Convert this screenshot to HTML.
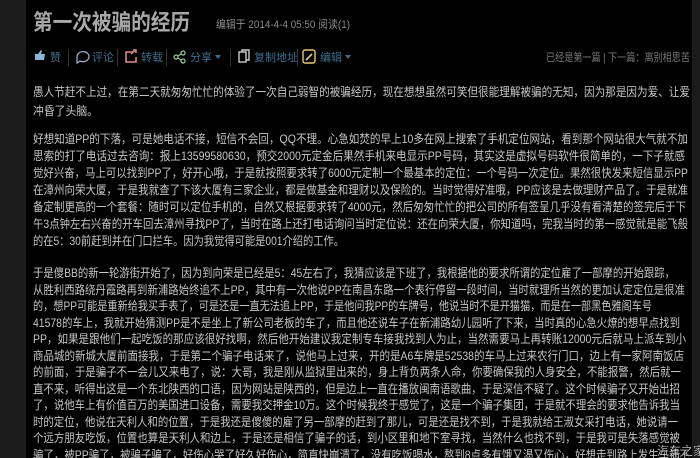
<!DOCTYPE html>
<html><head><meta charset="utf-8"><style>
html,body{margin:0;padding:0;width:700px;height:458px;overflow:hidden;background:#1b1b1b;}
.main{position:absolute;left:26px;top:0;width:666px;height:458px;background:#000;}
svg{position:absolute;left:0;top:0;}
text{font-family:"Liberation Sans","Noto Sans CJK SC","WenQuanYi Zen Hei",sans-serif;}
</style></head><body>
<div class="main"></div>
<svg width="700" height="458" viewBox="0 0 700 458">
<text x="33" y="30" font-size="22" font-weight="bold" fill="#a8a8a8" textLength="157" lengthAdjust="spacingAndGlyphs">第一次被骗的经历</text>
<text x="216" y="28" font-size="11" fill="#8a8a8a" textLength="134" lengthAdjust="spacingAndGlyphs">编辑于  2014-4-4 05:50  阅读(1)</text>
<!-- toolbar -->
<g fill="#3f6f8f" font-size="11">
<rect x="35" y="54" width="3" height="6" fill="#8ab4d8"/><path d="M38 54 L41 50 L42 51 L41 54 L45 54 L44 60 L38 60Z" fill="#8ab4d8"/>
<text x="50" y="61">赞</text>
<rect x="68" y="49" width="1" height="17" fill="#333"/>
<path d="M77 57 a6 5 0 1 1 3 4 l-3 2z" fill="none" stroke="#9ab" stroke-width="1.3"/>
<text x="92" y="61">评论</text>
<rect x="117" y="49" width="1" height="17" fill="#333"/>
<path d="M133 52 h-7 v10 h10 v-5" fill="none" stroke="#e08888" stroke-width="1.6"/><path d="M131 54 l5-4 m-3 0 h3 v3" fill="none" stroke="#e08888" stroke-width="1.4"/>
<text x="141" y="61">转载</text>
<rect x="166" y="49" width="1" height="17" fill="#333"/>
<g fill="none" stroke="#9c9" stroke-width="1.2"><circle cx="176" cy="57" r="2"/><circle cx="183" cy="53" r="2"/><circle cx="183" cy="61" r="2"/><path d="M178 56 l3-2 M178 58 l3 2"/></g>
<text x="190" y="61">分享</text>
<path d="M215 55 h6 l-3 4z" fill="#3f6f8f"/>
<rect x="230" y="49" width="1" height="17" fill="#333"/>
<rect x="239" y="52" width="7" height="10" fill="none" stroke="#ccc" stroke-width="1.4"/><path d="M242 52 v-2 h7 v10 h-3" fill="none" stroke="#ccc" stroke-width="1.4"/>
<text x="254" y="61">复制地址</text>
<rect x="297" y="49" width="1" height="17" fill="#333"/>
<rect x="303" y="50" width="12" height="13" rx="2" fill="none" stroke="#e8c878" stroke-width="1.4"/><path d="M306 60 l6-6" stroke="#e8c878" stroke-width="1.6"/>
<text x="320" y="61">编辑</text>
<path d="M345 55 h6 l-3 4z" fill="#3f6f8f"/>
<text x="546" y="61" fill="#777" textLength="144" lengthAdjust="spacingAndGlyphs">已经是第一篇 | 下一篇：离别相思苦</text>
</g>
<g font-size="12" fill="#c6c6c6" lengthAdjust="spacingAndGlyphs">
<text x="33" y="96" textLength="657" lengthAdjust="spacingAndGlyphs">愚人节赶不上过，在第二天就匆匆忙忙的体验了一次自己弱智的被骗经历，现在想想虽然可笑但很能理解被骗的无知，因为那是因为爱、让爱</text>
<text x="33" y="115" textLength="65" lengthAdjust="spacingAndGlyphs">冲昏了头脑。</text>
<text x="33" y="143" textLength="655" lengthAdjust="spacingAndGlyphs">好想知道PP的下落，可是她电话不接，短信不会回，QQ不理。心急如焚的早上10多在网上搜索了手机定位网站，看到那个网站很大气就不加</text>
<text x="33" y="160" textLength="652" lengthAdjust="spacingAndGlyphs">思索的打了电话过去咨询：报上13599580630，预交2000元定金后果然手机来电显示PP号码，其实这是虚拟号码软件很简单的，一下子就感</text>
<text x="33" y="177" textLength="655" lengthAdjust="spacingAndGlyphs">觉好兴奋，马上可以找到PP了，好开心哦，于是就按照要求转了6000元定制一个最基本的定位：一个号码一次定位。果然很快发来短信显示PP</text>
<text x="33" y="194" textLength="655" lengthAdjust="spacingAndGlyphs">在漳州向荣大厦，于是我就查了下该大厦有三家企业，都是做基金和理财以及保险的。当时觉得好准哦，PP应该是去做理财产品了。于是就准</text>
<text x="33" y="211" textLength="653" lengthAdjust="spacingAndGlyphs">备定制更高的一个套餐：随时可以定位手机的，自然又根据要求转了4000元，然后匆匆忙忙的把公司的所有签呈几乎没有看清楚的签完后于下</text>
<text x="33" y="228" textLength="655" lengthAdjust="spacingAndGlyphs">午3点钟左右兴奋的开车回去漳州寻找PP了，当时在路上还打电话询问当时定位说：还在向荣大厦，你知道吗，完我当时的第一感觉就是能飞般</text>
<text x="33" y="245" textLength="311" lengthAdjust="spacingAndGlyphs">的在5：30前赶到并在门口拦车。因为我觉得可能是001介绍的工作。</text>
<text x="33" y="277" textLength="642" lengthAdjust="spacingAndGlyphs">于是傻BB的新一轮游街开始了，因为到向荣是已经是5：45左右了，我猜应该是下班了，我根据他的要求所谓的定位雇了一部摩的开始跟踪，</text>
<text x="33" y="294" textLength="652" lengthAdjust="spacingAndGlyphs">从胜利西路绕丹霞路再到新浦路始终追不上PP，其中有一次他说PP在南昌东路一个表行停留一段时间，当时就理所当然的更加认定定位是很准</text>
<text x="33" y="310" textLength="619" lengthAdjust="spacingAndGlyphs">的，想PP可能是重新给我买手表了，可是还是一直无法追上PP，于是他问我PP的车牌号，他说当时不是开猫猫，而是在一部黑色雅阁车号</text>
<text x="33" y="327" textLength="647" lengthAdjust="spacingAndGlyphs">41578的车上，我就开始猜测PP是不是坐上了新公司老板的车了，而且他还说车子在新浦路幼儿园听了下来，当时真的心急火燎的想早点找到</text>
<text x="33" y="343" textLength="653" lengthAdjust="spacingAndGlyphs">PP，如果是跟他们一起吃饭的那应该很好找啊，然后他开始建议我定制专车接我找到人为止，当然需要马上再转账12000元后就马上派车到小</text>
<text x="33" y="360" textLength="651" lengthAdjust="spacingAndGlyphs">商品城的新城大厦前面接我，于是第二个骗子电话来了，说他马上过来，开的是A6车牌是52538的车马上过来农行门口，边上有一家阿南饭店</text>
<text x="33" y="376" textLength="648" lengthAdjust="spacingAndGlyphs">的前面，于是骗子不一会儿又来电了，说：大哥，我是刚从监狱里出来的，身上背负两条人命，你要确保我的人身安全，不能报警，然后就一</text>
<text x="33" y="393" textLength="647" lengthAdjust="spacingAndGlyphs">直不来，听得出这是一个东北陕西的口语，因为网站是陕西的，但是边上一直在播放闽南语歌曲，于是深信不疑了。这个时候骗子又开始出招</text>
<text x="33" y="409" textLength="647" lengthAdjust="spacingAndGlyphs">了，说他车上有价值百万的美国进口设备，需要我交押金10万。这个时候我终于感觉了，这是一个骗子集团，于是就不理会的要求他告诉我当</text>
<text x="33" y="426" textLength="645" lengthAdjust="spacingAndGlyphs">时的定位，他说在天利人和的位置，于是我还是傻傻的雇了另一部摩的赶到了那儿，可是还是找不到，于是我就给王淑女采打电话，她说请一</text>
<text x="33" y="442" textLength="647" lengthAdjust="spacingAndGlyphs">个远方朋友吃饭，位置也算是天利人和边上，于是还是相信了骗子的话，到小区里和地下室寻找，当然什么也找不到，于是我可是失落感觉被</text>
<text x="33" y="459" textLength="657" lengthAdjust="spacingAndGlyphs">骗了，被PP骗了，被骗子骗了，好伤心哭了好久好伤心，简直快崩溃了，没有吃饭喝水，熬到8点多有饿又渴又伤心，好想走到路上发生车祸不</text>
</g>
<text x="657" y="455" font-size="12" fill="#fff" stroke="#000" stroke-width="0.3">汽车之家</text>
</svg>
</body></html>
